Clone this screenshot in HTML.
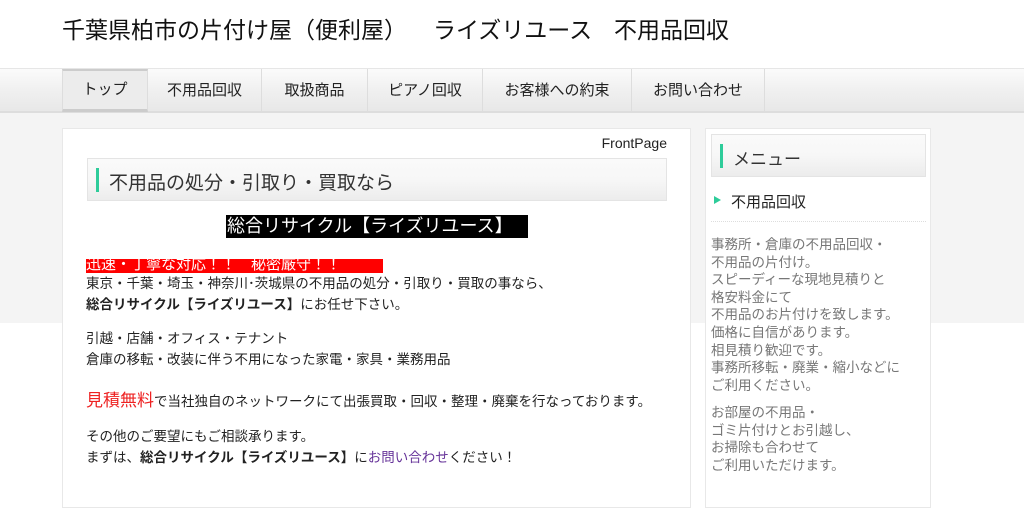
<!DOCTYPE html>
<html><head><meta charset="utf-8"><style>
*{margin:0;padding:0;box-sizing:border-box}
body{width:1024px;height:494px;overflow:hidden;font-family:"Liberation Sans","Noto Sans CJK JP",sans-serif;color:#222;background:#fff;position:relative}
.bg{position:absolute;left:0;top:113px;width:1024px;height:210px;background:#f4f4f4}
.t{position:absolute;top:14px;font-size:23px;line-height:32px;color:#111;white-space:nowrap}
.nav{position:absolute;left:0;top:68px;width:1024px;height:45px;background:linear-gradient(#fbfbfb,#f0f0f0 50%,#e8e8e8);border-top:1px solid #e6e6e6;border-bottom:2px solid #ddd}
.nav a{position:absolute;top:0;height:43px;line-height:43px;text-align:center;font-size:15px;color:#222;border-right:1px solid #ddd}
.nav a.on{background:#ececec;border-top:2px solid #ccc;border-bottom:3px solid #ccc;line-height:38px}
.main{position:absolute;left:62px;top:128px;width:629px;height:380px;background:#fff;border:1px solid #e8e8e8}
.side{position:absolute;left:705px;top:128px;width:226px;height:380px;background:#fff;border:1px solid #e8e8e8}
.fp{position:absolute;right:23px;top:6px;font-size:14px}
.hd{position:absolute;background:linear-gradient(#fafafa,#f7f7f7 50%,#ececec);border:1px solid #e4e4e4}
.hd i{position:absolute;left:8px;top:9px;width:3px;height:24px;background:#2ecc9a}
.hd span{position:absolute;left:21px;font-size:19px;color:#333}
p{position:absolute;font-size:13.5px;line-height:21px;white-space:nowrap}
.side p{color:#777;font-size:13.5px;line-height:17.6px}
</style></head><body>
<div class="bg"></div>
<div class="t" style="left:62px">千葉県柏市の片付け屋（便利屋）</div>
<div class="t" style="left:433px">ライズリユース</div>
<div class="t" style="left:614px">不用品回収</div>
<div class="nav">
<a class="on" style="left:62px;width:86px;border-left:1px solid #ddd">トップ</a>
<a style="left:148px;width:114px">不用品回収</a>
<a style="left:262px;width:106px">取扱商品</a>
<a style="left:368px;width:115px">ピアノ回収</a>
<a style="left:483px;width:149px">お客様への約束</a>
<a style="left:632px;width:133px">お問い合わせ</a>
</div>
<div class="main">
<div class="fp">FrontPage</div>
<div class="hd" style="left:24px;top:29px;width:580px;height:43px"><i></i><span style="top:9px">不用品の処分・引取り・買取なら</span></div>
<div style="position:absolute;left:163px;top:86px;height:23px;width:302px;background:#000;color:#fff;font-size:18px;line-height:23px;padding-left:1px">総合リサイクル【ライズリユース】</div>
<div style="position:absolute;left:23px;top:130px;height:14px;width:297px;background:#f00;color:#fff;font-size:15px;line-height:12px;overflow:hidden">迅速・丁寧な対応！！　秘密厳守！！</div>
<p style="left:23px;top:144px">東京・千葉・埼玉・神奈川･茨城県の不用品の処分・引取り・買取の事なら、<br><span style="font-weight:bold;color:#222">総合リサイクル【ライズリユース】</span>にお任せ下さい。</p>
<p style="left:23px;top:199px">引越・店舗・オフィス・テナント<br>倉庫の移転・改装に伴う不用になった家電・家具・業務用品</p>
<p style="left:23px;top:261px"><span style="color:#e22;font-size:17px">見積無料</span>で当社独自のネットワークにて出張買取・回収・整理・廃棄を行なっております。</p>
<p style="left:23px;top:297px">その他のご要望にもご相談承ります。<br>まずは、<b>総合リサイクル【ライズリユース】</b>に<span style="color:#639">お問い合わせ</span>ください！</p>
</div>
<div class="side">
<div class="hd" style="left:5px;top:5px;width:215px;height:43px"><i></i><span style="top:10px;font-size:17px">メニュー</span></div>
<div style="position:absolute;left:8px;top:67px;width:0;height:0;border-left:7px solid #2ecc9a;border-top:4.5px solid transparent;border-bottom:4.5px solid transparent"></div>
<div style="position:absolute;left:25px;top:62px;font-size:15px">不用品回収</div>
<div style="position:absolute;left:5px;top:92px;width:215px;border-top:1px dotted #ddd"></div>
<p style="left:5px;top:107px">事務所・倉庫の不用品回収・<br>不用品の片付け。<br>スピーディーな現地見積りと<br>格安料金にて<br>不用品のお片付けを致します。<br>価格に自信があります。<br>相見積り歓迎です。<br>事務所移転・廃業・縮小などに<br>ご利用ください。</p>
<p style="left:5px;top:275px">お部屋の不用品・<br>ゴミ片付けとお引越し、<br>お掃除も合わせて<br>ご利用いただけます。</p>
</div>
</body></html>
